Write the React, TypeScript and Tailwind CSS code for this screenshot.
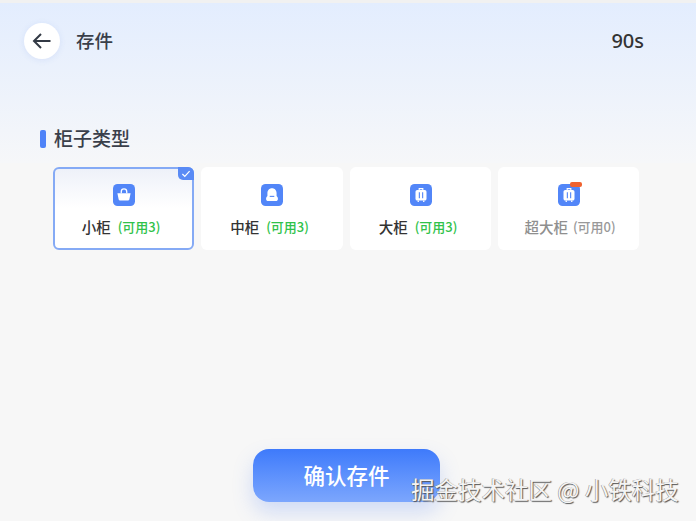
const font = { fontFamily: '"Noto Sans CJK SC", "Noto Sans", sans-serif' };

function Bag() {
  return (
    <svg viewBox="0 0 24 24" className="h-[22px] w-[22px]">
      <rect width="24" height="24" rx="5" fill="#5286f8" />
      <path d="M9 10V8.400a3 3 0 0 1 6 0V10" fill="none" stroke="#fff" strokeWidth="1.400" />
      <path d="M4.800 10h14.400l-1.400 6.800a1.500 1.500 0 0 1-1.500 1.200H7.700a1.500 1.500 0 0 1-1.500-1.200z" fill="#fff" />
    </svg>
  );
}

function Pack() {
  return (
    <svg viewBox="0 0 24 24" className="h-[22px] w-[22px]">
      <rect width="24" height="24" rx="5" fill="#5286f8" />
      <path d="M12 4.500c-3.200 0-5 2.500-5 5.200V13c-1 .9-1.500 2-1.500 3 0 1.500 1 2.500 2.500 2.500h8c1.500 0 2.500-1 2.500-2.500 0-1-.5-2.100-1.500-3V9.700C17 7 15.200 4.500 12 4.500z" fill="#fff" />
      <path d="M9.500 13.500h5" stroke="#5286f8" strokeWidth="1.200" />
    </svg>
  );
}

function Case({ badge }: { badge?: boolean }) {
  return (
    <div className="relative h-[22px] w-[22px]">
      <svg viewBox="0 0 24 24" className="h-[22px] w-[22px]">
        <rect width="24" height="24" rx="5" fill="#5286f8" />
        <path d="M10 6.500V5h4v1.500" fill="none" stroke="#fff" strokeWidth="1.200" />
        <rect x="6" y="6.500" width="12" height="11.500" rx="2" fill="#fff" />
        <path d="M10.200 9v6.500M13.800 9v6.500" stroke="#5286f8" strokeWidth="1.200" />
        <path d="M9 18v1.500M15 18v1.500" stroke="#fff" strokeWidth="1.400" />
      </svg>
      {badge && <div className="absolute right-[-2px] top-[-2px] h-[5px] w-[12px] rounded-[2px] bg-[#f0622f]" />}
    </div>
  );
}

function Card({
  name,
  avail,
  icon,
  active,
  disabled,
  wide,
}: {
  name: string;
  avail: string;
  icon: React.ReactNode;
  active?: boolean;
  disabled?: boolean;
  wide?: boolean;
}) {
  const width = wide ? "w-[142px]" : "w-[141px]";
  const frame = active
    ? "relative flex h-[83px] flex-col items-center rounded-[6px] border-2 border-[#85aaf5] bg-gradient-to-b from-[#eef1f9] to-[#ffffff] to-50% pt-[15px]"
    : "relative flex h-[83px] flex-col items-center rounded-[6px] bg-white pt-[17px]";
  return (
    <div className={`${frame} ${width}`}>
      {icon}
      <div className={disabled ? "mt-[11px] flex items-center pl-[3px] leading-[20px]" : "mt-[11px] flex items-center pr-[5px] leading-[20px]"}>
        <span className={disabled ? "text-[14.500px] font-medium text-[#8f8f8f]" : "text-[14.500px] font-medium text-[#333333]"}>{name}</span>
        <span className={disabled ? "ml-[5px] text-[13px] font-medium text-[#999999]" : "ml-[7px] text-[13px] font-medium text-[#2fc24a]"}>(可用{avail})</span>
      </div>
      {active && (
        <div className="absolute right-[-2px] top-[-2px] flex h-[13px] w-[16px] items-center justify-center rounded-bl-[5px] rounded-tr-[6px] bg-[#5a8bf5]">
          <svg viewBox="0 0 12 10" className="h-[8px] w-[10px]">
            <path d="M1.500 5l3 3 6-6.500" fill="none" stroke="#fff" strokeWidth="1.500" />
          </svg>
        </div>
      )}
    </div>
  );
}

export default function App() {
  return (
    <div className="relative flex h-[521px] w-[696px] flex-col overflow-hidden bg-[#f7f7f7]" style={font}>
      <div className="h-[3px] bg-[#f1f1f1]" />
      <div className="flex h-[160px] flex-col bg-gradient-to-b from-[#e3edfe] to-[#f6f7f9]">
        <div className="flex items-center pl-[24px] pr-[52px] pt-[20px]">
          <div className="flex h-[36px] w-[36px] items-center justify-center rounded-full bg-white shadow-[0_1px_6px_rgba(80,120,220,0.12)]">
            <svg viewBox="0 0 24 24" className="h-[24px] w-[24px]" fill="none" stroke="#333a45" strokeWidth="2">
              <path d="M20.500 12H4.500M11 5l-7 7 7 7" />
            </svg>
          </div>
          <span className="ml-[16px] pb-[2px] text-[18.500px] font-medium leading-[34px] text-[#3a3f4a]">存件</span>
          <span className="ml-auto text-[20px] font-medium leading-[34px] text-[#333333]" style={{ fontFamily: '"Noto Sans", sans-serif' }}>90s</span>
        </div>
        <div className="mt-[69px] flex items-center pl-[40px]">
          <div className="h-[18px] w-[6px] rounded-[2px] bg-[#4f83f8]" />
          <span className="ml-[8px] pb-[1px] text-[19px] font-medium leading-[20px] text-[#3a3f4a]">柜子类型</span>
        </div>
      </div>
      <div className="mt-[4px] flex gap-[7px] pl-[53px]">
        <Card name="小柜" avail="3" icon={<Bag />} active />
        <Card name="中柜" avail="3" icon={<Pack />} wide />
        <Card name="大柜" avail="3" icon={<Case />} />
        <Card name="超大柜" avail="0" icon={<Case badge />} disabled />
      </div>
      <div className="mt-[199px] flex pl-[253px]">
        <div className="flex h-[53px] w-[187px] items-center justify-center rounded-[16px] bg-gradient-to-b from-[#3e7afb] to-[#7ca6fd] text-[21.500px] font-medium text-white shadow-[0_10px_20px_rgba(90,135,245,0.25)]">
          确认存件
        </div>
      </div>
      <div
        className="absolute left-[411px] top-[474px] whitespace-nowrap text-[23.500px] leading-[30px] text-[#f4f4f4]"
        style={{ textShadow: "1px 1px 1px #555, -0.5px -0.5px 0.5px #888" }}
      >
        掘金技术社区 @ 小铁科技
      </div>
    </div>
  );
}
